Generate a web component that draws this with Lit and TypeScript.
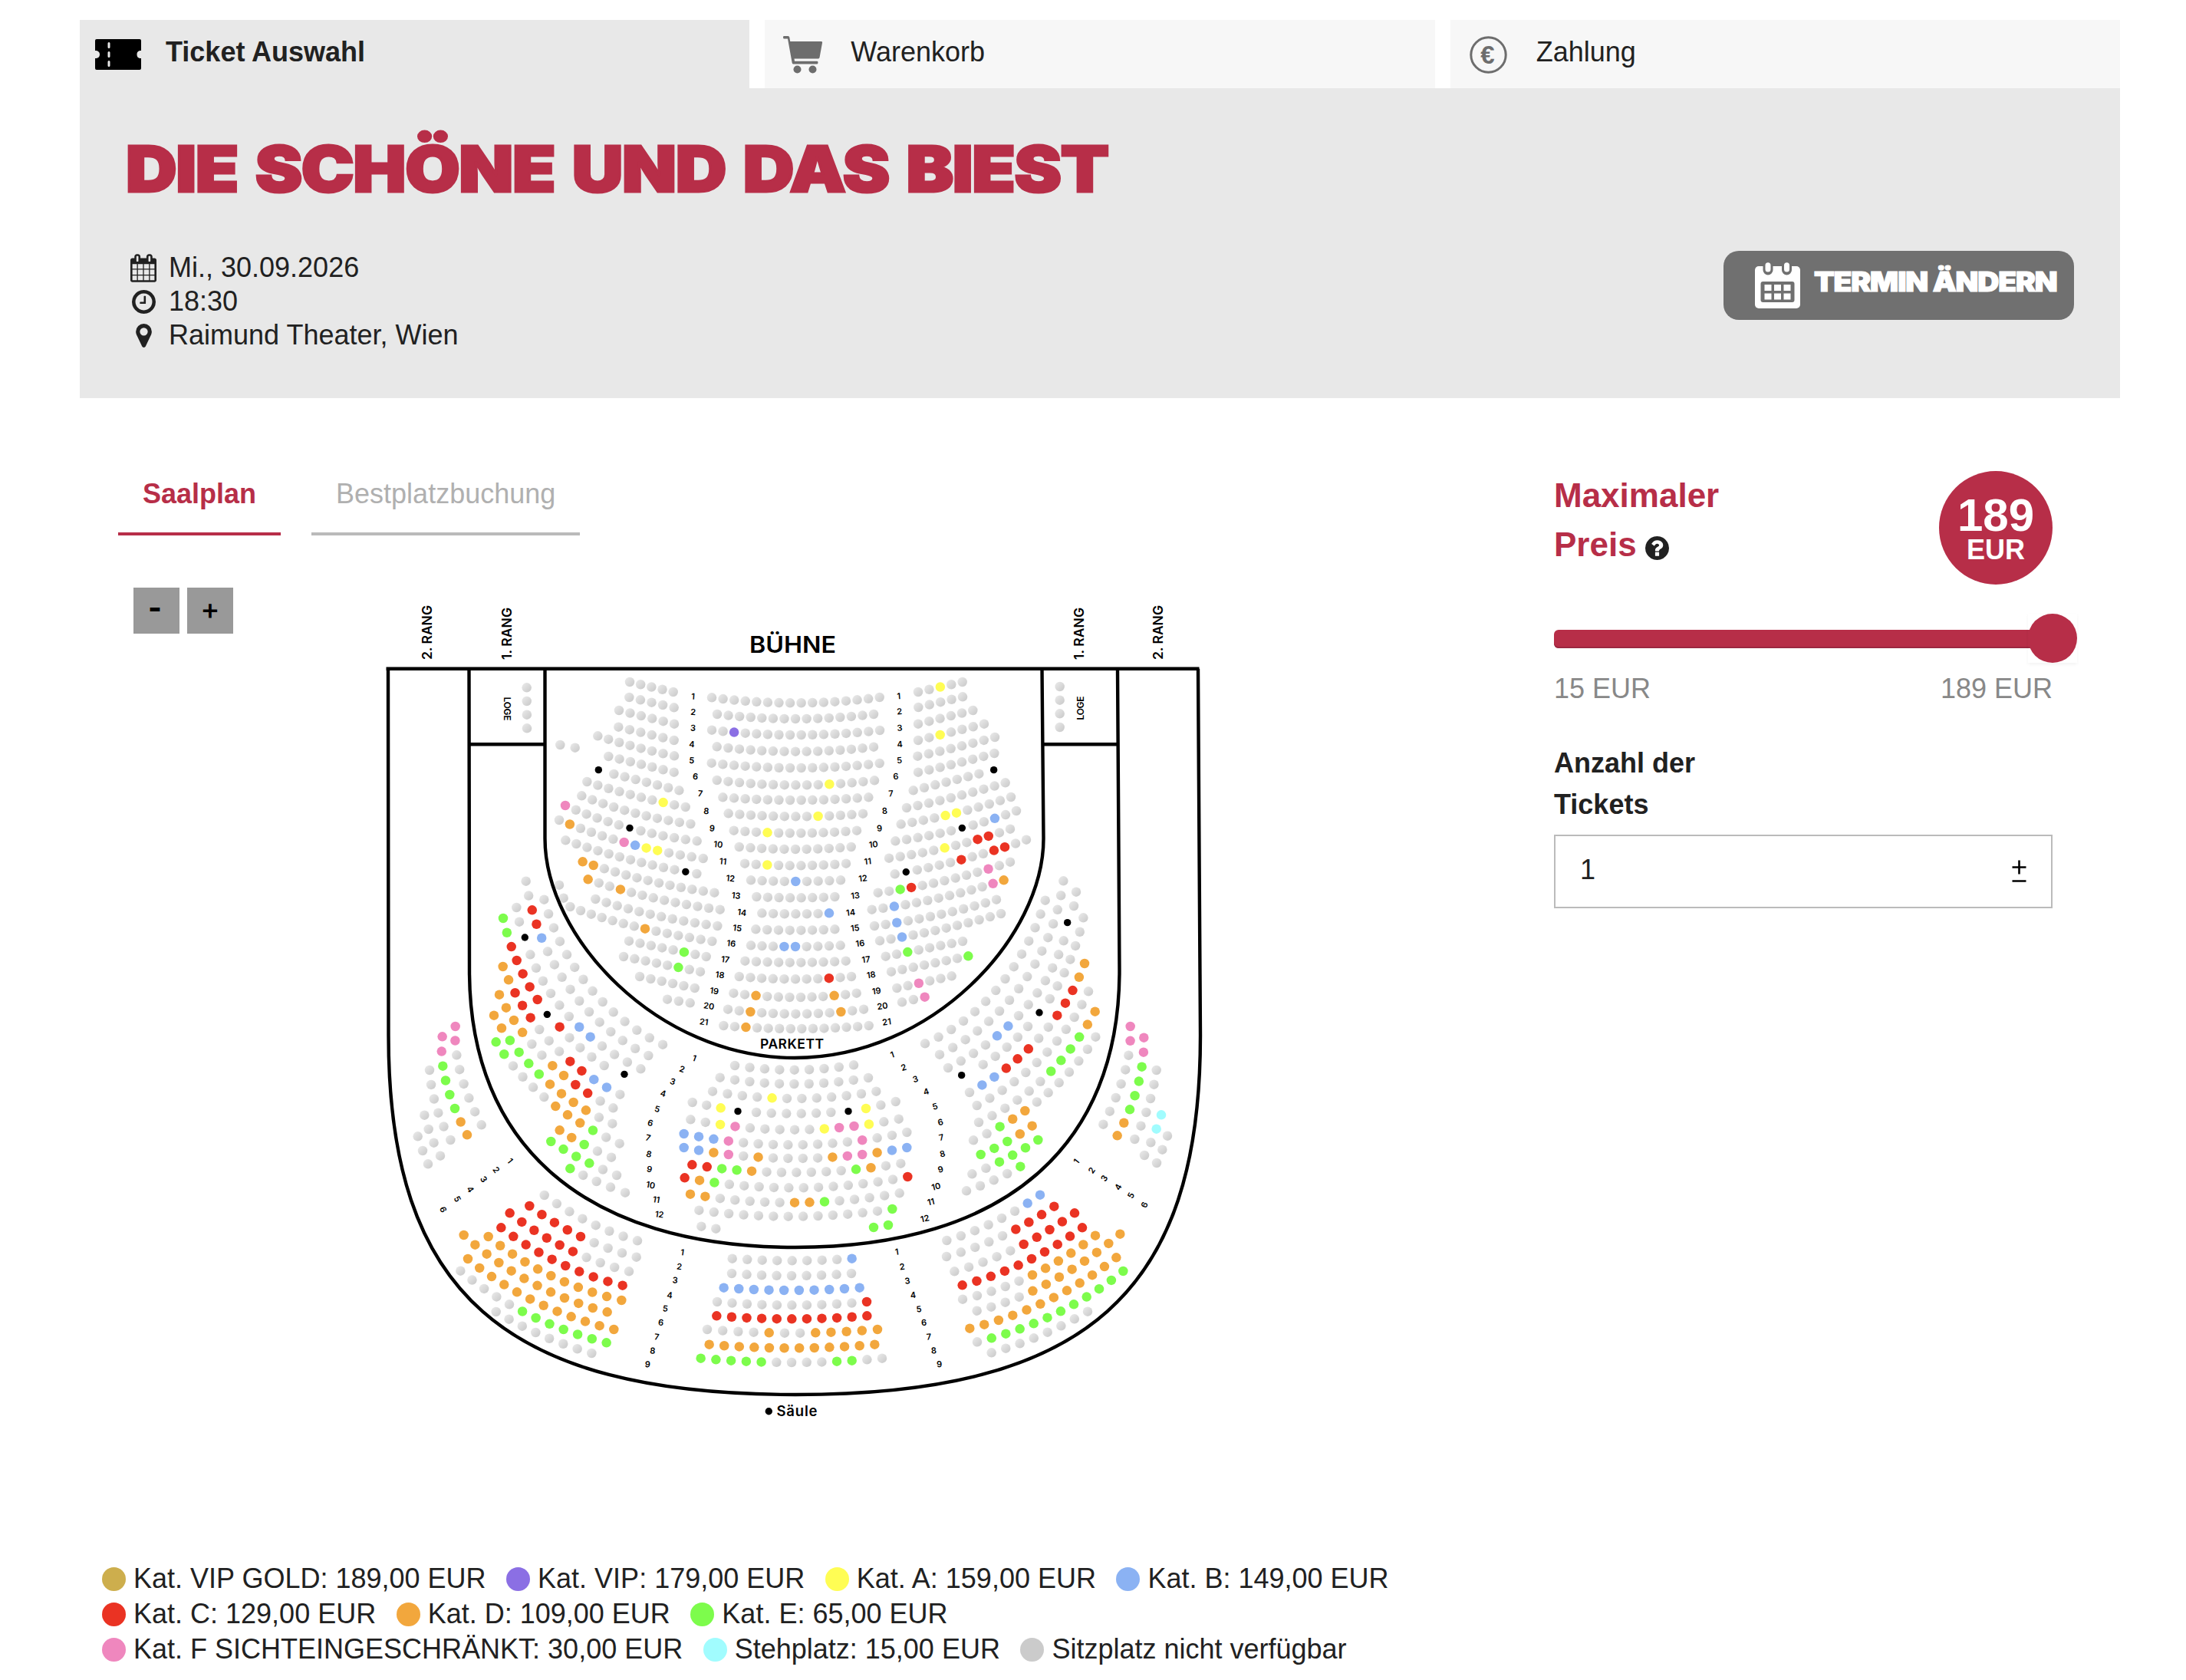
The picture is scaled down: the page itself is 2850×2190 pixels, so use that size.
import { LitElement, css, html, svg } from "lit";
import { customElement, property, state } from "lit/decorators.js";

type Node = [index: number, x: number, y: number];
type Row = [seats: string, ...nodes: Node[]];
type Label = [text: string, x: number, y: number];

interface Section {
  origin: [number, number];
  rows: Row[];
}

interface Numbering {
  origin: [number, number];
  angles: [number, number];
  labels: Label[];
}

interface Category {
  label: string;
  color: string;
}

//One letter per seat: g = not available, k = pillar, the rest are categories
const SEAT_COLORS: Record<string, string> = {
  v: "#8b6fe4",
  y: "#fffd54",
  b: "#8bb2f3",
  r: "#ea3323",
  o: "#f2a73d",
  e: "#7dfc4c",
  p: "#ef87be",
  c: "#a1fcfe",
  k: "#000",
  g: "url(#seat)",
};

const CATEGORIES: Category[] = [
  { label: "Kat. VIP GOLD: 189,00 EUR", color: "#cdae4d" },
  { label: "Kat. VIP: 179,00 EUR", color: "#8b6fe4" },
  { label: "Kat. A: 159,00 EUR", color: "#fffd54" },
  { label: "Kat. B: 149,00 EUR", color: "#8bb2f3" },
  { label: "Kat. C: 129,00 EUR", color: "#ea3323" },
  { label: "Kat. D: 109,00 EUR", color: "#f2a73d" },
  { label: "Kat. E: 65,00 EUR", color: "#7dfc4c" },
  { label: "Kat. F SICHTEINGESCHRÄNKT: 30,00 EUR", color: "#ef87be" },
  { label: "Stehplatz: 15,00 EUR", color: "#a1fcfe" },
  { label: "Sitzplatz nicht verfügbar", color: "#cbcbcb" },
];

//Section coordinates are thirds of a plan unit, counted from the section origin.
//A row is a seat string and the seats (by index) its curve runs through.
const SECTIONS: Section[] = [
  //Parkett left
  {
    origin: [690, 860],
    rows: [
      ["ggggg", [0, 393, 87], [4, 563, 126]],
      ["ggggg", [0, 391, 147], [4, 566, 187]],
      ["gggggg", [0, 351, 198], [5, 567, 251]],
      ["gggggg", [0, 349, 263], [5, 566, 315]],
      ["gggggggg", [0, 268, 298], [3, 394, 335], [7, 567, 376]],
      ["ggggggg", [0, 310, 378], [6, 566, 440]],
      ["ggggggg", [0, 331, 447], [6, 586, 511]],
      ["gggggggygg", [0, 226, 477], [4, 395, 527], [9, 611, 576]],
      ["ggggggggggg", [0, 205, 532], [5, 415, 600], [10, 631, 642]],
      ["pgggggkgggggg", [0, 141, 570], [6, 393, 658], [12, 656, 709]],
      ["goggggpbyygggg", [0, 117, 627], [6, 371, 714], [13, 680, 777]],
      ["gggggggggggkg", [0, 142, 706], [6, 396, 782], [12, 655, 837]],
      ["ooggggggggggg", [0, 209, 790], [6, 464, 863], [12, 724, 911]],
      ["oggoggggggggg", [0, 230, 859], [6, 485, 931], [12, 746, 977]],
      ["gggggggggggg", [0, 259, 936], [5, 473, 995], [11, 736, 1041]],
      ["gggggggogggggg", [0, 160, 966], [1, 201, 981], [7, 453, 1052], [13, 715, 1101]],
      ["gggggegg", [0, 390, 1100], [7, 692, 1161]],
      ["gggggegg", [0, 369, 1161], [7, 669, 1220]],
      ["gggggg", [0, 432, 1239], [5, 647, 1284]],
      ["ggg", [0, 540, 1328], [2, 629, 1342]],
      ["gg", [0, 121, 333], [1, 179, 344]],
      ["gg", [0, 117, 881], [1, 134, 932]],
      ["k", [0, 271, 431]],
      ["gggg", [0, -10, 109], [3, -9, 268]],
    ],
  },
  //Parkett center
  {
    origin: [880, 860],
    rows: [
      ["gggggggggggggggg", [0, 144, 148], [7.5, 472, 169], [15, 800, 147]],
      ["ggggggggggggggg", [0, 165, 213], [7, 471, 231], [14, 777, 213]],
      ["ggvggggggggggggg", [0, 144, 275], [7.5, 472, 294], [15, 801, 276]],
      ["ggggggggggggggg", [0, 164, 340], [7, 471, 359], [14, 777, 341]],
      ["gggggggggggggggg", [0, 143, 404], [7.5, 472, 423], [15, 800, 405]],
      ["ggggggggggygggg", [0, 164, 471], [7, 472, 490], [14, 780, 472]],
      ["gggggggggggggg", [0, 187, 538], [6.5, 472, 549], [13, 757, 538]],
      ["ggggggggygggg", [0, 209, 601], [6, 472, 613], [12, 735, 602]],
      ["gggygggggggg", [0, 230, 668], [5.5, 471, 678], [11, 711, 668]],
      ["ggggggggggg", [0, 251, 732], [5, 471, 741], [10, 689, 732]],
      ["ggyggggggg", [0, 273, 797], [4.5, 471, 805], [9, 669, 797]],
      ["ggggbgggg", [0, 297, 862], [4, 472, 867], [8, 648, 862]],
      ["gggggggg", [0, 319, 927], [3.5, 472, 931], [7, 625, 927]],
      ["ggggggb", [0, 340, 991], [3, 472, 994], [6, 603, 991]],
      ["gggggggg", [0, 316, 1054], [3.5, 471, 1058], [7, 625, 1054]],
      ["gggbbgggg", [0, 297, 1117], [4, 471, 1122], [8, 647, 1117]],
      ["gggggggggg", [0, 274, 1178], [4.5, 471, 1184], [9, 668, 1178]],
      ["ggggggggrgg", [0, 251, 1239], [5, 471, 1249], [10, 690, 1239]],
      ["ggoggggggogg", [0, 229, 1304], [5.5, 470, 1320], [11, 710, 1304]],
      ["ggogggggggogg", [0, 207, 1367], [6, 472, 1385], [12, 738, 1367]],
      ["ggoggggggggggg", [0, 190, 1431], [6.5, 474, 1443], [13, 758, 1431]],
    ],
  },
  //Parkett right
  {
    origin: [1130, 860],
    rows: [
      ["ggygg", [0, 201, 126], [4, 374, 87]],
      ["ggggg", [0, 202, 186], [4, 375, 145]],
      ["gggggg", [0, 201, 251], [5, 415, 198]],
      ["ggygggg", [0, 201, 315], [6, 459, 251]],
      ["gggggggg", [0, 199, 377], [4, 372, 337], [7, 501, 303]],
      ["gggggggg", [0, 201, 440], [4, 372, 400], [7, 499, 366]],
      ["ggggggg", [0, 182, 511], [6, 439, 446]],
      ["gggggggggg", [0, 156, 579], [4, 329, 540], [9, 542, 481]],
      ["ggggyyggggg", [0, 134, 643], [5, 351, 599], [10, 564, 537]],
      ["ggggggkggbgg", [0, 112, 709], [6, 373, 658], [11, 585, 591]],
      ["gggggyggrrgg", [0, 87, 776], [5, 305, 736], [11, 561, 662]],
      ["gkggggrggrrgg", [0, 110, 838], [6, 370, 782], [12, 624, 704]],
      ["ggerggggggpgg", [0, 44, 911], [6, 304, 864], [12, 561, 791]],
      ["ggbggggggggpo", [0, 20, 977], [6, 281, 932], [12, 536, 862]],
      ["ggbggggggggg", [0, 30, 1041], [6, 292, 995], [11, 507, 938]],
      ["ggbggggggggg", [0, 51, 1099], [6, 311, 1049], [11, 525, 993]],
      ["ggeggggg", [0, 74, 1160], [7, 375, 1101]],
      ["ggggggge", [0, 96, 1220], [7, 397, 1159]],
      ["ggpggg", [0, 118, 1284], [5, 332, 1237]],
      ["ggp", [0, 138, 1339], [2, 227, 1319]],
      ["k", [0, 497, 431]],
      ["gggg", [0, 755, 105], [3, 755, 264]],
    ],
  },
  //1. Rang left, 2. Rang outer left
  {
    origin: [500, 1120],
    rows: [
      ["gggggggggggggg", [0, 628, 158], [4, 717, 373], [9, 899, 598], [13, 1092, 725]],
      ["ggrrbggggggggggg", [0, 557, 86], [5, 642, 361], [10, 804, 597], [15, 1036, 768]],
      ["gg", [0, 520, 189], [1, 531, 245]],
      ["k", [0, 553, 306]],
      ["ggggggbbgggg", [0, 574, 373], [4, 688, 571], [7, 809, 695], [11, 1006, 820]],
      ["eerrrrr", [0, 468, 231], [3, 521, 396], [6, 602, 549]],
      ["k", [0, 640, 607]],
      ["rgggg", [0, 689, 656], [2, 769, 737], [4, 863, 807]],
      ["k", [0, 942, 841]],
      ["oorrrgggrrbbg", [0, 467, 420], [4, 575, 620], [8, 730, 791], [12, 925, 920]],
      ["ooooggoorrgg", [0, 453, 530], [4, 580, 723], [7, 705, 846], [11, 898, 973]],
      ["ooeeeeoooogg", [0, 432, 611], [4, 568, 799], [7, 696, 917], [11, 895, 1034]],
      ["eeggggoooegg", [0, 440, 715], [4, 585, 892], [7, 720, 1000], [11, 923, 1112]],
      ["ooegg", [0, 689, 1060], [2, 785, 1116], [4, 891, 1166]],
      ["eeeegg", [0, 655, 1104], [3, 805, 1189], [5, 912, 1236]],
      ["egggg", [0, 730, 1210], [2, 833, 1260], [4, 945, 1304]],
      ["ppgggggg", [0, 281, 654], [2, 286, 766], [5, 334, 934], [7, 383, 1039]],
      ["ppeeeeoo", [0, 230, 694], [2, 232, 809], [5, 279, 975], [7, 327, 1078]],
      ["gggggg", [0, 180, 825], [3, 214, 992], [5, 262, 1098]],
      ["gggg", [0, 160, 1001], [1, 176, 1056], [3, 222, 1160]],
      ["ggg", [0, 134, 1084], [1, 153, 1140], [2, 174, 1192]],
    ],
  },
  //1. Rang right, 2. Rang outer right
  {
    origin: [1180, 1110],
    rows: [
      ["gggggggggggggg", [0, 548, 191], [4, 456, 401], [9, 273, 626], [13, 78, 751]],
      ["gggggggggggggggg", [0, 619, 115], [5, 535, 389], [10, 369, 624], [15, 135, 794]],
      ["gg", [0, 669, 158], [1, 660, 213]],
      ["k", [0, 635, 278]],
      ["gggggggbbgggg", [0, 620, 349], [4, 517, 553], [8, 360, 721], [12, 168, 846]],
      ["ggggggg", [0, 697, 259], [3, 646, 422], [6, 566, 576]],
      ["k", [0, 525, 630]],
      ["ggggg", [0, 480, 684], [2, 398, 765], [4, 305, 833]],
      ["k", [0, 221, 875]],
      ["oorrrggrrrbbg", [0, 702, 438], [4, 595, 641], [8, 440, 811], [12, 252, 942]],
      ["gggggggggggg", [0, 717, 547], [4, 594, 741], [7, 472, 864], [11, 281, 993]],
      ["ooeeeegggggg", [0, 743, 626], [4, 610, 817], [7, 485, 937], [11, 288, 1059]],
      ["gggggggooegg", [0, 745, 725], [4, 602, 904], [7, 469, 1014], [11, 267, 1129]],
      ["ooeee", [0, 497, 1073], [2, 400, 1134], [4, 296, 1185]],
      ["eeeegg", [0, 520, 1128], [3, 369, 1214], [5, 262, 1261]],
      ["egggg", [0, 451, 1232], [2, 347, 1285], [4, 240, 1327]],
      ["ppgggggg", [0, 881, 684], [2, 874, 797], [5, 824, 963], [7, 775, 1067]],
      ["ppeeeeoo", [0, 934, 728], [2, 926, 842], [5, 879, 1009], [7, 830, 1111]],
      ["gggggg", [0, 983, 855], [3, 943, 1020], [5, 898, 1125]],
      ["ccgg", [0, 1002, 1030], [1, 983, 1085], [3, 936, 1188]],
      ["ggg", [0, 1026, 1112], [1, 1006, 1166], [2, 984, 1218]],
    ],
  },
  //2. Rang left, both center blocks
  {
    origin: [550, 1360],
    rows: [
      ["gggggggg", [0, 479, 594], [3, 628, 686], [7, 843, 772]],
      ["rrrrrgggg", [0, 421, 636], [4, 621, 756], [8, 839, 836]],
      ["rrrrrrgggg", [0, 344, 664], [4, 539, 789], [9, 810, 892]],
      ["rrrrrrrrrr", [0, 310, 721], [4, 509, 845], [9, 785, 947]],
      ["ooooooooooo", [0, 260, 756], [5, 505, 909], [10, 781, 1005]],
      ["oooooooooooo", [0, 164, 750], [4, 350, 890], [8, 558, 996], [11, 725, 1051]],
      ["oooooooooooo", [0, 180, 843], [4, 372, 973], [8, 584, 1069], [11, 751, 1119]],
      ["gggggeeeeeee", [0, 151, 890], [4, 342, 1021], [8, 554, 1119], [11, 722, 1171]],
      ["gggggggg", [0, 290, 1050], [3, 445, 1131], [7, 664, 1212]],
      ["ggggggggg", [0, 1224, 87], [4, 1457, 104], [8, 1689, 85]],
      ["ggggggggggg", [0, 1166, 134], [5, 1456, 159], [10, 1746, 135]],
      ["ggggyggggggg", [0, 1137, 188], [5.5, 1457, 216], [11, 1777, 188]],
      ["ggy", [0, 1058, 231], [2, 1169, 253]],
      ["k", [0, 1236, 266]],
      ["gggggg", [0, 1308, 270], [2.5, 1455, 275], [5, 1600, 270]],
      ["k", [0, 1668, 266]],
      ["ygg", [0, 1737, 255], [2, 1853, 228]],
      ["ggypgggggyppygg", [0, 1051, 298], [7, 1458, 338], [14, 1865, 296]],
      ["bbbpggggggggpggg", [0, 1025, 354], [7.5, 1461, 397], [15, 1897, 348]],
      ["bbopgoggggoppobb", [0, 1025, 408], [7.5, 1461, 450], [15, 1897, 408]],
      ["rreeoggggggeogg", [0, 1057, 475], [7, 1465, 505], [14, 1873, 470]],
      ["roeggggggggggggr", [0, 1028, 526], [7.5, 1464, 565], [15, 1900, 522]],
      ["oogggggooeggggg", [0, 1050, 590], [7, 1458, 623], [14, 1868, 586]],
      ["ggggggggggggge", [0, 1084, 653], [6.5, 1462, 677], [13, 1840, 648]],
      ["gg", [0, 1093, 716], [1, 1150, 725]],
      ["ee", [0, 1767, 720], [1, 1824, 711]],
      ["ggggggggb", [0, 1214, 842], [4, 1448, 850], [8, 1682, 842]],
      ["ggggggggg", [0, 1212, 900], [4, 1446, 909], [8, 1680, 900]],
      ["bbbbbbbbbb", [0, 1181, 956], [4.5, 1446, 966], [9, 1712, 956]],
      ["ggggggggggr", [0, 1155, 1011], [5, 1447, 1024], [10, 1740, 1011]],
      ["rrrrrrrrrrr", [0, 1153, 1066], [5, 1447, 1078], [10, 1741, 1066]],
      ["ggggoggooooo", [0, 1116, 1119], [5.5, 1449, 1133], [11, 1782, 1119]],
      ["oooooooooooo", [0, 1124, 1178], [5.5, 1447, 1192], [11, 1771, 1178]],
      ["eeeeeggggeegg", [0, 1091, 1232], [6, 1446, 1248], [12, 1800, 1232]],
    ],
  },
  //2. Rang right
  {
    origin: [1040, 1360],
    rows: [
      ["ggggggbb", [0, 583, 771], [4, 798, 684], [7, 948, 593]],
      ["gggggrrrr", [0, 582, 834], [4, 801, 753], [8, 1003, 638]],
      ["gggggrrrrr", [0, 613, 892], [5, 884, 786], [9, 1083, 664]],
      ["rrrrrrrrrr", [0, 644, 946], [5, 915, 843], [9, 1113, 721]],
      ["gggggoooooo", [0, 645, 1001], [5, 918, 906], [10, 1164, 752]],
      ["ggggoooooooo", [0, 701, 1046], [3, 866, 992], [7, 1073, 884], [11, 1261, 746]],
      ["oooooooooooo", [0, 673, 1115], [3, 841, 1064], [7, 1053, 967], [11, 1246, 838]],
      ["geeeeeeeeeee", [0, 702, 1168], [3, 869, 1117], [7, 1080, 1021], [11, 1273, 891]],
      ["gggggggg", [0, 758, 1210], [4, 977, 1130], [7, 1134, 1049]],
    ],
  },
];

//angles: rotation of the first and of the last number
const NUMBERINGS: Numbering[] = [
  {
    origin: [880, 860],
    angles: [4, 8],
    labels: [
      ["1", 71, 143], ["2", 71, 204], ["3", 71, 266], ["4", 66, 330], ["5", 65, 393],
      ["6", 80, 456], ["7", 99, 523], ["8", 123, 591], ["9", 145, 659], ["10", 169, 722],
      ["11", 188, 788], ["12", 217, 855], ["13", 239, 922], ["14", 262, 988], ["15", 244, 1049],
      ["16", 220, 1109], ["17", 197, 1172], ["18", 176, 1232], ["19", 154, 1295],
      ["20", 133, 1354], ["21", 113, 1416],
    ],
  },
  {
    origin: [880, 860],
    angles: [-4, -8],
    labels: [
      ["1", 875, 142], ["2", 878, 202], ["3", 879, 266], ["4", 879, 330], ["5", 878, 393],
      ["6", 864, 456], ["7", 845, 523], ["8", 820, 591], ["9", 800, 659], ["10", 776, 722],
      ["11", 754, 788], ["12", 735, 855], ["13", 705, 922], ["14", 687, 988], ["15", 704, 1049],
      ["16", 724, 1109], ["17", 747, 1172], ["18", 767, 1232], ["19", 788, 1295],
      ["20", 811, 1354], ["21", 828, 1416],
    ],
  },
  {
    origin: [550, 1360],
    angles: [20, 8],
    labels: [
      ["1", 1066, 58], ["2", 1018, 101], ["3", 981, 149], ["4", 944, 196], ["5", 921, 257],
      ["6", 894, 311], ["7", 885, 369], ["8", 888, 433], ["9", 890, 492], ["10", 895, 554],
      ["11", 917, 611], ["12", 929, 669],
    ],
  },
  {
    origin: [1040, 1360],
    angles: [-18, -12],
    labels: [
      ["1", 370, 44], ["2", 414, 94], ["3", 460, 140], ["4", 502, 189], ["5", 537, 247],
      ["6", 558, 308], ["7", 562, 368], ["8", 566, 432], ["9", 559, 493], ["10", 541, 560],
      ["11", 521, 620], ["12", 497, 685],
    ],
  },
  {
    origin: [550, 1360],
    angles: [8, 5],
    labels: [
      ["1", 1019, 817], ["2", 1007, 873], ["3", 991, 926], ["4", 969, 985], ["5", 952, 1037],
      ["6", 935, 1092], ["7", 919, 1148], ["8", 903, 1202], ["9", 883, 1255],
    ],
  },
  {
    origin: [1040, 1360],
    angles: [-8, -5],
    labels: [
      ["1", 388, 815], ["2", 408, 873], ["3", 429, 929], ["4", 451, 984], ["5", 474, 1039],
      ["6", 494, 1092], ["7", 513, 1147], ["8", 532, 1201], ["9", 554, 1255],
    ],
  },
  {
    origin: [550, 1360],
    angles: [52, 64],
    labels: [
      ["1", 345, 459], ["2", 291, 495], ["3", 242, 532], ["4", 190, 571], ["5", 139, 609],
      ["6", 84, 650],
    ],
  },
  {
    origin: [1040, 1360],
    angles: [-52, -64],
    labels: [
      ["1", 1090, 462], ["2", 1150, 497], ["3", 1199, 528], ["4", 1253, 562], ["5", 1303, 595],
      ["6", 1356, 632],
    ],
  },
];

//Point of the curve through all nodes at the given seat index
function pointAt(nodes: Node[], index: number) {
  let x = 0;
  let y = 0;
  for (const a of nodes) {
    let weight = 1;
    for (const b of nodes) {
      if (a !== b) weight *= (index - b[0]) / (a[0] - b[0]);
    }
    x += a[1] * weight;
    y += a[2] * weight;
  }
  return { x, y };
}

@customElement("seat-plan")
export class SeatPlan extends LitElement {
  static styles = css`
    :host {
      display: block;
      width: 1100px;
      height: 1100px;
    }

    svg {
      display: block;
      font-family: Inter, "Liberation Sans", sans-serif;
      font-weight: 600;
    }

    .walls {
      fill: none;
      stroke: #000;
      stroke-width: 4.4;
    }

    .number {
      font-size: 11px;
      text-anchor: middle;
    }

    .stage {
      font-size: 30.5px;
    }

    .rang {
      font-size: 17.5px;
    }

    .loge {
      font-size: 12px;
      text-anchor: middle;
    }

    .parkett {
      font-size: 17.5px;
    }

    .pillar {
      font-size: 18.5px;
    }
  `;

  private renderRow(section: Section, [seats, ...nodes]: Row) {
    const [ox, oy] = section.origin;
    return [...seats].map((kind, i) => {
      const { x, y } = pointAt(nodes, i);
      return svg`<circle
        cx=${(ox + x / 3).toFixed(2)}
        cy=${(oy + y / 3).toFixed(2)}
        r=${kind === "k" ? 4.7 : 6.25}
        fill=${SEAT_COLORS[kind]}
      ></circle>`;
    });
  }

  private renderNumbers({ origin, angles, labels }: Numbering) {
    return labels.map(([text, lx, ly], i) => {
      const x = origin[0] + lx / 3;
      const y = origin[1] + ly / 3;
      const angle = angles[0] + ((angles[1] - angles[0]) * i) / (labels.length - 1);
      return svg`<text
        class="number"
        transform="translate(${x.toFixed(2)} ${y.toFixed(2)}) rotate(${angle.toFixed(1)})"
        y="4"
      >${text}</text>`;
    });
  }

  render() {
    return html`<svg width="1100" height="1100" viewBox="480 766 1100 1100">
      <defs>
        <linearGradient id="seat" x1="0.1" y1="0.1" x2="0.9" y2="0.9">
          <stop offset="0" stop-color="#e8e8e8" />
          <stop offset="1" stop-color="#cbcbcb" />
        </linearGradient>
      </defs>
      ${SECTIONS.map((section) => section.rows.map((row) => this.renderRow(section, row)))}
      <g class="walls">
        <path
          d="M503.500 871.700H1563.500M506 871.700L506.500 1350C506.500 1685 657 1818 1037 1818S1565 1685 1565 1350L1562 871.700"
        />
        <path
          d="M611.500 871.700L612 1265C612 1493 762 1626 1037 1626S1459.500 1493 1459.500 1265L1457 871.700"
        />
        <path
          d="M710.500 871.700L710.500 1093C710.500 1221 856 1379 1036 1379S1360.500 1221 1360.500 1093L1358.500 871.700"
        />
        <path d="M611.500 970.300H710.500M1359.500 970.300H1457.500" />
      </g>
      ${NUMBERINGS.map((numbering) => this.renderNumbers(numbering))}
      <text class="stage" x="977" y="851" textLength="113" lengthAdjust="spacingAndGlyphs">BÜHNE</text>
      <text class="parkett" x="991" y="1366.500" textLength="83">PARKETT</text>
      <text class="rang" transform="translate(562.500 860) rotate(-90)" textLength="71">2. RANG</text>
      <text class="rang" transform="translate(666.500 860) rotate(-90)" textLength="68">1. RANG</text>
      <text class="rang" transform="translate(1412.500 860) rotate(-90)" textLength="68">1. RANG</text>
      <text class="rang" transform="translate(1515.500 860) rotate(-90)" textLength="71">2. RANG</text>
      <text class="loge" transform="translate(656.500 924) rotate(90)" textLength="31">LOGE</text>
      <text class="loge" transform="translate(1412.500 923) rotate(-90)" textLength="31">LOGE</text>
      <circle cx="1002.300" cy="1839.700" r="4.700" />
      <text class="pillar" x="1012.500" y="1846" textLength="53">Säule</text>
    </svg>`;
  }
}

@customElement("price-slider")
export class PriceSlider extends LitElement {
  static styles = css`
    :host {
      display: block;
      color: #888;
      font-size: 36px;
      line-height: 44px;
    }

    .track {
      display: flex;
      align-items: center;
      height: 64px;
      margin-right: -32px;
    }

    .bar {
      height: 24px;
      border-radius: 6px;
      background: #b72e48;
      box-shadow: inset 0 -2px 0 #9b2740;
    }

    .handle {
      width: 64px;
      height: 64px;
      flex: none;
      margin-left: -32px;
      margin-top: -3px;
      box-shadow: 0 2px 4px rgba(0, 0, 0, 0.05);
    }

    .knob {
      width: 64px;
      height: 64px;
      border-radius: 50%;
      background: #b72e48;
    }

    .limits {
      display: flex;
      justify-content: space-between;
      margin-top: 11px;
    }
  `;

  @property({ type: Number })
  min = 15;
  @property({ type: Number })
  max = 189;
  @property({ type: Number })
  value = 189;

  render() {
    const share = (this.value - this.min) / (this.max - this.min);
    return html`<div class="track">
        <div class="bar" style="width: ${share * 650}px"></div>
        <div class="handle"><div class="knob"></div></div>
      </div>
      <div class="limits">
        <span>${this.min} EUR</span>
        <span>${this.max} EUR</span>
      </div>`;
  }
}

@customElement("app-root")
export class AppRoot extends LitElement {
  static styles = css`
    :host {
      display: block;
      box-sizing: border-box;
      width: 2850px;
      height: 2190px;
      padding: 26px 86px 0 104px;
      overflow: hidden;
      background: #fff;
      color: #212121;
      font-family: "Liberation Sans", Arial, sans-serif;
      font-size: 36px;
      line-height: 44px;
    }

    svg {
      display: block;
    }

    .steps {
      display: grid;
      grid-template-columns: repeat(3, 1fr);
      gap: 20px;
    }

    .step {
      display: flex;
      box-sizing: border-box;
      height: 89px;
      gap: 32px;
      padding: 20px 20px 0;
      background: #f7f7f7;
    }

    .step.active {
      background: #e8e8e8;
      font-weight: bold;
    }

    .step-icon {
      display: flex;
      align-items: center;
      justify-content: center;
      width: 60px;
      height: 50px;
    }

    .euro {
      font: bold 33px "Liberation Sans", sans-serif;
      text-anchor: middle;
    }

    .banner {
      box-sizing: border-box;
      height: 404px;
      padding: 66px 60px 0 60px;
      background: #e8e8e8;
    }

    h1 {
      width: max-content;
      margin: 0 0 66px;
      color: #b72e48;
      font-family: Inter, sans-serif;
      font-size: 82px;
      font-weight: 900;
      line-height: 80px;
      letter-spacing: -1.2px;
      word-spacing: 5px;
      white-space: nowrap;
      transform: scaleX(1.125);
      transform-origin: left;
      -webkit-text-stroke: 3px #b72e48;
    }

    .event {
      display: flex;
      justify-content: space-between;
      align-items: flex-start;
    }

    .facts {
      display: grid;
      grid-template-columns: 34px auto;
      column-gap: 16px;
      justify-items: center;
      align-items: center;
      padding-left: 6px;
    }

    .facts span {
      justify-self: start;
    }

    .change {
      display: flex;
      box-sizing: border-box;
      width: 457px;
      height: 90px;
      padding: 15px 0 0 41px;
      gap: 18px;
      border-radius: 20px;
      background: #707070;
      color: #fff;
      font-family: Inter, sans-serif;
      font-weight: 900;
      font-size: 35px;
      line-height: 50px;
      letter-spacing: -1px;
      white-space: nowrap;
      -webkit-text-stroke: 1.2px #fff;
    }

    .change span {
      transform: scaleX(1.11);
      transform-origin: left;
    }

    .content {
      display: flex;
      justify-content: space-between;
      padding-right: 88px;
    }

    .tabs {
      display: flex;
      gap: 40px;
      padding: 103px 0 0 50px;
    }

    .tab {
      padding: 0 32px 28px;
      border-bottom: 4px solid #bababa;
      color: #b0b0b0;
    }

    .tab.active {
      border-color: #b72e48;
      color: #b72e48;
      font-weight: bold;
    }

    .plan {
      display: flex;
      gap: 176px;
      padding: 68px 0 0 70px;
    }

    .zoom {
      display: flex;
      gap: 10px;
      height: 60px;
    }

    .zoom button {
      width: 60px;
      height: 60px;
      padding: 0 0 6px;
      border: none;
      background: #999;
      color: #000;
      font: 500 38px/50px Inter, sans-serif;
    }

    .zoom .minus {
      padding: 0 4px 8px 0;
      font-weight: 800;
    }

    .legend {
      display: flex;
      flex-wrap: wrap;
      column-gap: 26.5px;
      width: 1750px;
      padding: 169px 0 0 29px;
      line-height: 46px;
    }

    .category {
      display: flex;
      align-items: center;
      gap: 10px;
      white-space: nowrap;
    }

    .dot {
      width: 31px;
      height: 31px;
      border-radius: 50%;
    }

    .panel {
      width: 650px;
      padding-top: 95px;
    }

    .price {
      display: flex;
      justify-content: space-between;
    }

    .price-label {
      color: #b72e48;
      font-size: 44px;
      font-weight: bold;
      line-height: 63.5px;
    }

    .price-label div {
      display: flex;
      align-items: center;
      gap: 11px;
    }

    .price-label svg {
      margin-top: 10px;
    }

    .badge {
      display: flex;
      flex-direction: column;
      align-items: center;
      box-sizing: border-box;
      width: 148px;
      height: 148px;
      padding-top: 31px;
      border-radius: 50%;
      background: #b72e48;
      color: #fff;
      font-weight: bold;
      line-height: 38px;
    }

    .badge b {
      font-size: 60px;
      line-height: 53px;
    }

    price-slider {
      margin-top: 39px;
    }

    .count-label {
      margin-top: 48px;
      font-weight: bold;
      line-height: 54px;
    }

    .count {
      display: flex;
      align-items: center;
      justify-content: space-between;
      box-sizing: border-box;
      height: 96px;
      margin-top: 12px;
      padding: 0 32px;
      border: 2px solid #bbb;
    }

    .count span {
      margin-top: -4px;
    }
  `;

  @state()
  private tickets = 1;
  @state()
  private price = 189;

  private ticketIcon = svg`<svg width="60" height="40" viewBox="0 0 60 40">
    <path
      d="M2 0H58Q60 0 60 2V15C56 15 54.500 17 54.500 20S56 25 60 25V38Q60 40 58 40H2Q0 40 0 38V25C4 25 6 23 6 20S4 15 0 15V2Q0 0 2 0Z"
      fill="#000"
    />
    <path d="M18 5.500v5M18 17.500v5M18 29.500v5" stroke="#e8e8e8" stroke-width="3" stroke-linecap="round" />
  </svg>`;

  private cartIcon = svg`<svg width="52" height="49" viewBox="0 0 52 49" fill="#6d6d6d">
    <path d="M1 0H6.500Q8 0 8.300 1.500L9.200 7H49.500Q51.500 7 51 9L47.500 28Q47 29.500 45.500 29.500H14.500L15 32.800H44.500Q45.500 32.800 45.500 34.500T44.500 36.400H13Q12 36.400 11.700 35L6 3.500H1Q0 3.500 0 1.700T1 0Z" />
    <circle cx="18.500" cy="43.500" r="5" />
    <circle cx="38.500" cy="43.500" r="5" />
  </svg>`;

  private euroIcon = svg`<svg width="49" height="49" viewBox="0 0 49 49" fill="#6d6d6d">
    <circle cx="24.500" cy="24.500" r="22.700" fill="none" stroke="#6d6d6d" stroke-width="3" />
    <text class="euro" x="23.500" y="36">€</text>
  </svg>`;

  private calendarIcon = svg`<svg width="34" height="37" viewBox="0 0 1664 1792" fill="#212121">
    <path d="M128 1664h288v-288h-288v288zm352 0h320v-288h-320v288zm-352-352h288v-320h-288v320zm352 0h320v-320h-320v320zm-352-384h288v-288h-288v288zm736 736h320v-288h-320v288zm-384-736h320v-288h-320v288zm768 736h288v-288h-288v288zm-384-352h320v-320h-320v320zm-352-864v-288q0-13-9.500-22.500t-22.500-9.500h-64q-13 0-22.500 9.500t-9.500 22.500v288q0 13 9.500 22.500t22.500 9.500h64q13 0 22.500-9.500t9.500-22.500zm736 864h288v-320h-288v320zm-384-384h320v-288h-320v288zm384 0h288v-288h-288v288zm32-480v-288q0-13-9.500-22.500t-22.500-9.500h-64q-13 0-22.500 9.500t-9.500 22.500v288q0 13 9.500 22.500t22.500 9.500h64q13 0 22.500-9.500t9.500-22.500zm384-64v1280q0 52-38 90t-90 38h-1408q-52 0-90-38t-38-90v-1280q0-52 38-90t90-38h128v-96q0-66 47-113t113-47h64q66 0 113 47t47 113v96h384v-96q0-66 47-113t113-47h64q66 0 113 47t47 113v96h128q52 0 90 38t38 90z" />
  </svg>`;

  private clockIcon = svg`<svg width="31" height="31" viewBox="128 128 1536 1536" fill="#212121">
    <path d="M1024 544v448q0 14-9 23t-23 9h-320q-14 0-23-9t-9-23v-64q0-14 9-23t23-9h224v-352q0-14 9-23t23-9h64q14 0 23 9t9 23zm416 352q0-148-73-273t-198-198-273-73-273 73-198 198-73 273 73 273 198 198 273 73 273-73 198-198 73-273zm224 0q0 209-103 385.500t-279.500 279.500-385.500 103-385.500-103-279.500-279.500-103-385.500 103-385.500 279.500-279.500 385.500-103 385.500 103 279.500 279.500 103 385.500z" />
  </svg>`;

  private pinIcon = svg`<svg width="21" height="31" viewBox="384 128 1024 1536" fill="#212121">
    <path d="M1152 640q0-106-75-181t-181-75-181 75-75 181 75 181 181 75 181-75 75-181zm256 0q0 109-33 179l-364 774q-16 33-47.500 52t-67.500 19-67.500-19-46.500-52l-365-774q-33-70-33-179 0-212 150-362t362-150 362 150 150 362z" />
  </svg>`;

  private helpIcon = svg`<svg width="31" height="31" viewBox="128 128 1536 1536" fill="#212121">
    <path d="M1024 1376v-192q0-14-9-23t-23-9h-192q-14 0-23 9t-9 23v192q0 14 9 23t23 9h192q14 0 23-9t9-23zm256-672q0-88-55.500-163t-138.500-116-170-41q-243 0-371 213-15 24 8 42l132 100q7 6 19 6 16 0 25-12 53-68 86-92 34-24 86-24 48 0 85.500 26t37.500 59q0 38-20 61t-68 45q-63 28-115.500 86.500t-52.500 125.500v36q0 14 9 23t23 9h192q14 0 23-9t9-23q0-19 21.500-49.500t54.500-49.500q32-18 49-28.500t46-35 44.500-48 28-60.500 12.500-81zm384 192q0 209-103 385.500t-279.500 279.500-385.500 103-385.500-103-279.500-279.500-103-385.500 103-385.500 279.500-279.500 385.500-103 385.500 103 279.500 279.500 103 385.500z" />
  </svg>`;

  private changeIcon = svg`<svg width="59" height="60" viewBox="0 0 59 60" fill="#fff">
    <rect y="5" width="59" height="55" rx="5" />
    <path d="M17 5V10M41.500 5V10" stroke="#707070" stroke-width="13" stroke-linecap="round" />
    <path d="M17 3.700V9M41.500 3.700V9" stroke="#fff" stroke-width="7" stroke-linecap="round" />
    <rect x="7.500" y="25" width="44" height="27" rx="3" fill="#707070" />
    <path d="M12.500 29h9v8h-9zM25 29h9v8h-9zM37.500 29h9v8h-9zM12.500 40.500h9v8h-9zM25 40.500h9v8h-9zM37.500 40.500h9v8h-9z" />
  </svg>`;

  private plusMinusIcon = svg`<svg width="19" height="30" viewBox="0 0 19 30">
    <path d="M0.500 9.500H18.500M9.500 0.500V18.500M0.500 27.500H18.500" stroke="#000" stroke-width="2.600" />
  </svg>`;

  render() {
    return html`<nav class="steps">
        <div class="step active">
          <div class="step-icon">${this.ticketIcon}</div>
          <span>Ticket Auswahl</span>
        </div>
        <div class="step">
          <div class="step-icon">${this.cartIcon}</div>
          <span>Warenkorb</span>
        </div>
        <div class="step">
          <div class="step-icon">${this.euroIcon}</div>
          <span>Zahlung</span>
        </div>
      </nav>

      <header class="banner">
        <h1>DIE SCHÖNE UND DAS BIEST</h1>
        <div class="event">
          <div class="facts">
            ${this.calendarIcon}<span>Mi., 30.09.2026</span>
            ${this.clockIcon}<span>18:30</span>
            ${this.pinIcon}<span>Raimund Theater, Wien</span>
          </div>
          <div class="change">${this.changeIcon}<span>TERMIN ÄNDERN</span></div>
        </div>
      </header>

      <main class="content">
        <section>
          <div class="tabs" role="tablist">
            <div class="tab active" role="tab">Saalplan</div>
            <div class="tab" role="tab">Bestplatzbuchung</div>
          </div>
          <div class="plan">
            <div class="zoom">
              <button class="minus">-</button>
              <button>+</button>
            </div>
            <seat-plan></seat-plan>
          </div>
          <div class="legend">
            ${CATEGORIES.map(
              ({ label, color }) => html`
                <div class="category">
                  <div class="dot" style="background: ${color}"></div>
                  <span>${label}</span>
                </div>
              `
            )}
          </div>
        </section>

        <aside class="panel">
          <div class="price">
            <div class="price-label">
              Maximaler
              <div>Preis ${this.helpIcon}</div>
            </div>
            <div class="badge"><b>${this.price}</b>EUR</div>
          </div>
          <price-slider .value=${this.price}></price-slider>
          <div class="count-label">Anzahl der<br />Tickets</div>
          <div class="count"><span>${this.tickets}</span>${this.plusMinusIcon}</div>
        </aside>
      </main>`;
  }
}
